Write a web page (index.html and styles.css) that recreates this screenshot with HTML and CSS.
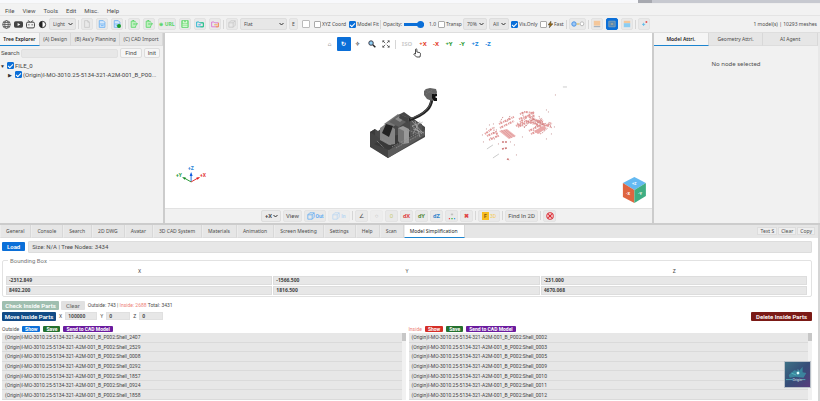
FILE: index.html
```html
<!DOCTYPE html>
<html lang="en">
<head>
<meta charset="utf-8">
<title>CAD Model Viewer</title>
<link rel="stylesheet" href="styles.css">
</head>
<body>
<svg class="defs" aria-hidden="true">
  <symbol id="doc" viewBox="0 0 10 10"><path d="M2 .8h4l2 2v6.4H2zM6 .8v2h2" fill="none" stroke="currentColor"/></symbol>
  <symbol id="docs" viewBox="0 0 10 10"><path d="M1.6.8h5l2 2v6.4h-7z" fill="#d5e8fb" stroke="currentColor"/><path d="M2 5h6.400M3.500 7h3.500" stroke="currentColor"/></symbol>
  <symbol id="exp" viewBox="0 0 10 10"><path d="M6.500 2.500V1.500h-5v7.700h5.500V7" fill="#bff0bf" stroke="currentColor"/><path d="M4 5h5M7.300 3l2 2-2 2M3 .6h2" fill="none" stroke="currentColor" stroke-width="1.200"/></symbol>
  <symbol id="folder" viewBox="0 0 10 10"><path d="M.8 2.500h3l1 1h4.400v5H.8z" fill="none" stroke="currentColor" stroke-width="1.200"/></symbol>
  <symbol id="cube" viewBox="0 0 10 10"><path d="M1 3.500h5.500V9H1zM1 3.500 3.500 1H9v5.500L6.500 9M6.500 3.500 9 1" fill="none" stroke="currentColor"/></symbol>
</svg>
<div class="app">
  <div class="window-edge"><i></i><b></b></div>
  <nav class="menu">
    <a href="#">File</a><a href="#">View</a><a href="#">Tools</a><a href="#">Edit</a><a href="#">Misc.</a><a href="#">Help</a>
  </nav>
  <div class="toolbar">
    <div class="links">
      <svg viewBox="0 0 10 10"><g fill="none" stroke="#555" stroke-width=".9"><circle cx="5" cy="5" r="4.300"/><ellipse cx="5" cy="5" rx="2" ry="4.300"/><path d="M.7 5h8.600M1.300 2.800h7.400M1.300 7.200h7.400"/></g></svg>
      <svg viewBox="0 0 10 10"><rect y="1.500" width="10" height="7" rx="1.800" fill="#444"/><path d="M4 3.300v3.400L7 5z" fill="#fff"/></svg>
      <svg viewBox="0 0 10 10"><g fill="none" stroke="#333" stroke-width="1"><rect x=".6" y="2.400" width="8.800" height="6.400" rx="1.500"/><path d="M2.600.5l1.500 1.900M7.400.5L5.900 2.400M3.200 4.600v1.400M6.800 4.600v1.400"/></g></svg>
      <svg viewBox="0 0 10 10"><circle cx="5" cy="5" r="3.500" fill="#fff" stroke="#222"/><path d="M5 1.500a3.500 3.500 0 0 0 0 7z" fill="#222"/></svg>
    </div>
    <select class="w-theme" aria-label="Theme"><option>Light</option></select>
    <span class="sep"></span>
    <div class="tools">
      <button aria-label="New" class="grey"><svg><use href="#doc"/></svg></button>
      <button aria-label="Open" class="blue"><svg><use href="#docs"/></svg></button>
      <button aria-label="Add" class="blue"><svg viewBox="0 0 10 10"><use href="#docs"/><circle cx="7.500" cy="7.500" r="2.500" fill="#199a25"/></svg></button>
    </div>
    <span class="sep"></span>
    <div class="tools">
      <button aria-label="Export" class="green"><svg><use href="#exp"/></svg></button>
      <button aria-label="Export part" class="green"><svg><use href="#exp"/></svg></button>
      <button class="green url">⊕ URL</button>
      <button aria-label="Save" class="green"><svg viewBox="0 0 10 10"><path d="M1 .8h8v8.400H1z" fill="#8ee48e" stroke="currentColor"/><path d="M3 1v2.500h4V1M2 6h6M2 8h6" fill="none" stroke="#f0fff0"/></svg></button>
      <button aria-label="Open folder" class="teal"><svg viewBox="0 0 10 10"><use href="#folder"/><path d="M5.500 3.500h3.700v5H5.500" fill="none" stroke="#2bc46c"/><path d="M3 6h3" stroke="#2188e8"/></svg></button>
      <button aria-label="Move folder" class="pink"><svg viewBox="0 0 10 10"><use href="#folder"/><path d="M6 8.500h3.200v-5M4 6h4" fill="none" stroke="#f69a32"/></svg></button>
    </div>
    <span class="sep"></span>
    <button aria-label="Box" class="tool grey"><svg><use href="#cube"/></svg></button>
    <select class="w-shade" aria-label="Shading"><option>Flat</option></select>
    <button class="edge">E</button>
    <button class="swatch" aria-label="Background colour"></button>
    <label class="check w-xyz"><input type="checkbox">XYZ Coord</label>
    <label class="check w-fit"><input type="checkbox" checked>Model Fit</label>
    <span class="sep"></span>
    <label class="opacity">Opacity:<input type="range" min="0" max="1" step="0.1" value="1"></label>
    <span class="value">1.0</span>
    <label class="check w-trans"><input type="checkbox">Transp</label>
    <select class="w-pct" aria-label="Transparency"><option>70%</option></select>
    <select class="w-all" aria-label="Scope"><option>All</option></select>
    <label class="check w-vis"><input type="checkbox" checked>Vis.Only</label>
    <label class="check w-fast"><input type="checkbox"><svg viewBox="0 0 6 8"><path d="M3.500 0 0 4.500h2.200L1.500 8 6 3.200H3.500z" fill="#9a6a10" stroke="#333" stroke-width=".5"/></svg>Fast</label>
    <span class="sep"></span>
    <button class="tool wide" aria-label="Link"><svg class="long" viewBox="0 0 14 8"><circle cx="3" cy="4" r="2.200" fill="#9cc7f5" stroke="#4b94e6"/><path d="M5.500 4h3" stroke="#d9b54a"/><ellipse cx="11" cy="3.800" rx="1.800" ry="2" fill="#fff" stroke="#bbb"/></svg></button>
    <span class="sep"></span>
    <div class="tools views">
      <button aria-label="Top layout"><svg viewBox="0 0 10 10"><path d="M1 1h8v6H1z" fill="#f4c79b"/><path d="M1 7.500h8V9H1z" fill="#a8b4c0"/></svg></button>
      <button aria-label="Middle layout" class="on"><svg viewBox="0 0 10 10"><path d="M1 1.500h8v7H1z" fill="#5689b4" stroke="#8aa5b8"/><path d="M3.500 5h3" stroke="#f5c78d"/></svg></button>
      <button aria-label="Bottom layout"><svg viewBox="0 0 10 10"><path d="M1 1h8v3H1z" fill="#f4c79b"/><path d="M1 4h8v5H1z" fill="#8bcdf2"/></svg></button>
    </div>
    <span class="sep"></span>
    <button class="tool" aria-label="Expand"><svg viewBox="0 0 10 10"><path d="M2.500 5.500h4M4.500 3.500v4" stroke="#54b6e8"/><path d="M7 2.500h2" stroke="#e23b3b" stroke-width="2"/></svg></button>
    <span class="stats">1 model(s) | 10293 meshes</span>
  </div>

  <main class="work">
    <aside class="side">
      <div class="tabs even tree-tabs">
        <button class="active">Tree Explorer</button><button>(A) Design</button><button>(B) Ass'y Planning</button><button>(C) CAD Import</button>
      </div>
      <form class="search"><label for="q">Search</label><input id="q" type="text"><button type="button">Find</button><button type="button">Init</button></form>
      <div class="tree">
        <label><span class="arrow">▼</span><input type="checkbox" checked>FILE_0</label>
        <label class="child"><span class="arrow">▶</span><input type="checkbox" checked><span class="name">(Origin)I-MO-3010.25-5134-321-A2M-001_B_P00...</span></label>
      </div>
    </aside>

    <section class="viewport">
      <svg class="scene" viewBox="165 33 487 175" preserveAspectRatio="xMidYMid meet">
        <g class="machine">
          <path d="M370 132l5-3 3 2 22-17 4-2 21 15v10l-37 21-18-12z" fill="#484848"/>
          <path d="M370 132l5-3v15l-5 3z" fill="#3a3a3a"/><path d="M370 132l18 12v14l-18-11z" fill="#444"/>
          <path d="M388 150l37-20v5l-37 23z" fill="#5b5b5b"/><path d="M374 144l13-7 32-6-30 19z" fill="#393939"/>
          <path d="M380 128l7-5 8 6v15l-6 1-9-5z" fill="#858585"/><path d="M384 124l14-10 7 5-14 9z" fill="#777"/>
          <path d="M389 122l11-8 10 5-11 8z" fill="#606060"/><path d="M395 119l6-4 5 2-6 5z" fill="#8b8b8b"/>
          <path d="M386 124l7 2-4 11-7-4z" fill="#222"/><path d="M398 128l5-2 6 3v14l-6 1-5-3z" fill="#999"/>
          <path d="M398 128l6 3v13l-6-3z" fill="#747474"/><path d="M400 114l8 4v5l-9-5z" fill="#444"/>
          <path d="M410 119l12 5v9l-12 3z" fill="#555"/><path d="M411 120l11 12m-10-6 11-4m-10 12 7-13m-8 5 10 8m-7-13 5 16m-7-8 11 4" stroke="#bbb" stroke-width=".6"/>
          <path d="M392 147l26-14M396 148l23-13M377 141l7 7M382 139l9 6M407 130l13 4" stroke="#8f8f8f" stroke-dasharray="1 1"/>
          <path d="M409 120q12-4 18-10 4-4 5-11" fill="none" stroke="#222" stroke-width="3"/><path d="M410 119q14-5 18-11 3-3 3-9" fill="none" stroke="#666" stroke-width=".8"/>
          <path d="M424 91l2-2 4-1 6 1 1 3-1 7-4 2-5-2-3-4z" fill="#636363"/><path d="M432 94h5v2h-2v2h2v3h-3l-2-3z" fill="#111"/><path d="M425 90l10 4m-9 0 7-4" stroke="#777" stroke-dasharray="1 1"/>
        </g>
        <g class="cloud" fill="none">
          <path d="M499 131l8-2 9 7-7 3z" fill="#e79c9c"/><path d="M501 130l9 8m-6-8 8 8m-6-8 9 7" stroke="#c86161" stroke-width=".5"/>
          <path d="M499 124l15-7M500 128l14-7M516 126l10-5 8 3 9-4M519 119l9-3 7 4 8 2M520 122l14-10M518 127l16-8 11 7 7-3M529 131l14-7 8 3M531 134l14-6M520 114l5-2 8 1 1 5M487 136l9-4 2 4-9 4M485 134l8-6M531 121l14 9" stroke="#d97777" stroke-width="2" stroke-dasharray="1 .6 2 1"/>
          <path d="M517 123l8 4 7-11 5 9 5-7M524 128l9-9 10 5M535 127l12-4M533 130l8 4 7-6M523 112v4M539 116l2 5M549 122l3 7M494 127v7M503 117l-3 5M510 116l-3 6" stroke="#b84f4f" stroke-width=".8" stroke-dasharray="1.500 1"/>
          <path d="M534 131l9-5 4 2-9 6z" fill="#e28a8a"/>
          <path d="M502 142h6M502 149l5-1M507 159l3 1" stroke="#bd5050" stroke-width="1.600" stroke-dasharray="2 1"/>
          <path d="M482 135h1M483 142h1M489 125h1M493 124h1M498 144h1M510 142h1M514 145h1M522 137h1M546 139h1M551 134h1M546 110h1M548 112h1M516 155h1M554 127h1M490 138h1M494 139h1M486 129h1M496 130h1M555 95h1" stroke="#b87878"/>
          <path d="M487 149l6-4M493 158l6-4M563 87h4" stroke="#aaa" stroke-width=".8"/>
        </g>
        <g class="axes" stroke-width="1">
          <path d="M191 182v-8" stroke="#1d70dd"/><path d="M191 182l-7-4" stroke="#2b9a37"/><path d="M191 182l7-4" stroke="#d33"/>
          <path d="M189.500 176l1.500-4 1.500 4z" fill="#125fe0"/><path d="M182 177l4 .8-1.500 2z" fill="#118a22"/><path d="M200 177l-4 .8 1.500 2z" fill="#e01818"/>
          <text x="188" y="170" fill="#3088d8">+Z</text><text x="176" y="177" fill="#249c34">+Y</text><text x="200" y="177" fill="#e23434">+X</text>
        </g>
        <g class="navcube">
          <path d="M623 183l11.500-6 11.500 6-11.500 7z" fill="#64b9f1"/><path d="M623 183l11.500 7v13l-11.500-6z" fill="#df6540"/><path d="M634.500 190l11.500-7v13l-11.500 7z" fill="#3fae83"/>
          <text x="632" y="185">+Z</text><text x="626" y="195">-X</text><text x="638" y="195">-Y</text>
        </g>
      </svg>
      <div class="viewtools">
        <button>⌂</button><button class="on">↻</button><button>✧</button>
        <button aria-label="Zoom"><svg viewBox="0 0 10 10"><circle cx="3.800" cy="3.800" r="2.800" fill="#8fd0f5" stroke="#334" stroke-width="1.200"/><path d="M6 6l3.200 3.200" stroke="#222" stroke-width="1.800"/></svg></button>
        <button aria-label="Fit"><svg viewBox="0 0 10 10"><path d="M1 3V1h2M7 1h2v2M9 7v2H7M3 9H1V7M1 1l3 3M9 1L6 4M1 9l3-3M9 9L6 6" fill="none" stroke="#333" stroke-width=".9"/></svg></button>
        <span class="sep"></span>
        <button class="iso">ISO</button><button class="x">+X</button><button class="x">-X</button><button class="y">+Y</button><button class="y">-Y</button><button class="z">+Z</button><button class="z">-Z</button>
      </div>
      <svg class="cursor" viewBox="0 0 8 10"><path d="M2.500 6V1.300q.7-1 1.400 0V4l3 .7q.8.5.6 1.600L7 9H3.500L.8 6.300q0-1.200 1.700-.3z" fill="#fff" stroke="#222" stroke-width=".8"/></svg>
      <div class="viewbar">
        <select aria-label="Axis"><option>+X</option></select>
        <button class="w-view">View</button>
        <button class="w-cube blue"><svg><use href="#cube"/></svg>Out</button>
        <button class="w-cube blue faint"><svg><use href="#cube"/></svg>In</button>
        <span class="sep"></span>
        <button>∠</button><button class="faint">○</button><button class="olive">0</button><button class="dx">dX</button><button class="dy">dY</button><button class="dz">dZ</button>
        <button aria-label="Points"><svg viewBox="0 0 10 10"><path d="M3.500 3h3M5 1.500v3" stroke="#aaa" stroke-width=".7"/><path d="M1 8.300h1.600" stroke="#e44" stroke-width="1.500"/><path d="M4.200 8.300h1.600" stroke="#3b3" stroke-width="1.500"/><path d="M7.400 8.300H9" stroke="#39e" stroke-width="1.500"/></svg></button>
        <button class="dx">✖</button>
        <span class="sep"></span>
        <button class="w-3d"><b>F</b>3D</button>
        <span class="sep"></span>
        <button class="w-find">Find In 2D</button>
        <span class="sep"></span>
        <button aria-label="Cancel"><svg viewBox="0 0 10 10"><circle cx="5" cy="5" r="4" fill="#fff" stroke="#d92d35" stroke-width="1.300"/><path d="M2.800 2.800l4.400 4.400M7.200 2.800L2.800 7.200" stroke="#d92d35" stroke-width="1.500"/></svg></button>
      </div>
    </section>

    <aside class="side attrs">
      <div class="tabs even"><button class="active">Model Attri.</button><button>Geometry Attri.</button><button>AI Agent</button></div>
      <p>No node selected</p>
    </aside>
  </main>

  <section class="bottom">
    <div class="tabs bottom-tabs">
      <button>General</button><button>Console</button><button>Search</button><button>2D DWG</button><button>Avatar</button><button>3D CAD System</button><button>Materials</button><button>Animation</button><button>Screen Meeting</button><button>Settings</button><button>Help</button><button>Scan</button><button class="active">Model Simplification</button>
      <div class="log"><button>Text S</button><button>Clear</button><button>Copy</button></div>
    </div>
    <div class="panel">
      <div class="load"><button class="solid c-blue">Load</button><div>Size: N/A | Tree Nodes: 3434</div></div>
      <fieldset>
        <legend>Bounding Box</legend>
        <table>
          <thead><tr><th>X</th><th>Y</th><th>Z</th></tr></thead>
          <tbody>
            <tr><td><input aria-label="Min X" value="-2312.849"></td><td><input aria-label="Min Y" value="-1566.500"></td><td><input aria-label="Min Z" value="-231.000"></td></tr>
            <tr><td><input aria-label="Max X" value="8492.200"></td><td><input aria-label="Max Y" value="1816.500"></td><td><input aria-label="Max Z" value="4670.068"></td></tr>
          </tbody>
        </table>
      </fieldset>
      <div class="row"><button class="solid c-mint w-check">Check Inside Parts</button><button class="solid c-clear">Clear</button><span>Outside: 743 | <em>Inside: 2688</em> Total: 3431</span></div>
      <div class="row move"><button class="solid c-navy w-move">Move Inside Parts</button><label>X<input value="100000"></label><label>Y<input value="0"></label><label>Z<input value="0"></label><button class="solid c-maroon">Delete Inside Parts</button></div>
      <div class="lists">
        <div class="list">
          <div class="chips"><span>Outside</span><button class="c-blue">Show</button><button class="c-green">Save</button><button class="c-purple">Send to CAD Model</button></div>
          <ul>
            <li>(Origin)I-MO-3010.25-5134-321-A2M-001_B_P002:Shell_2407</li><li>(Origin)I-MO-3010.25-5134-321-A2M-001_B_P002:Shell_2529</li><li>(Origin)I-MO-3010.25-5134-321-A2M-001_B_P002:Shell_0008</li><li>(Origin)I-MO-3010.25-5134-321-A2M-001_B_P002:Shell_0292</li><li>(Origin)I-MO-3010.25-5134-321-A2M-001_B_P002:Shell_1857</li><li>(Origin)I-MO-3010.25-5134-321-A2M-001_B_P002:Shell_0924</li><li>(Origin)I-MO-3010.25-5134-321-A2M-001_B_P002:Shell_1858</li>
          </ul>
        </div>
        <div class="list">
          <div class="chips"><span class="in">Inside</span><button class="c-red">Show</button><button class="c-green">Save</button><button class="c-purple">Send to CAD Model</button></div>
          <ul>
            <li>(Origin)I-MO-3010.25-5134-321-A2M-001_B_P002:Shell_0002</li><li>(Origin)I-MO-3010.25-5134-321-A2M-001_B_P002:Shell_0003</li><li>(Origin)I-MO-3010.25-5134-321-A2M-001_B_P002:Shell_0005</li><li>(Origin)I-MO-3010.25-5134-321-A2M-001_B_P002:Shell_0009</li><li>(Origin)I-MO-3010.25-5134-321-A2M-001_B_P002:Shell_0010</li><li>(Origin)I-MO-3010.25-5134-321-A2M-001_B_P002:Shell_0011</li><li>(Origin)I-MO-3010.25-5134-321-A2M-001_B_P002:Shell_0012</li>
          </ul>
        </div>
      </div>
    </div>
    <svg class="avatar" viewBox="0 0 27 27">
      <defs><linearGradient id="night" x2="1" y2="1"><stop stop-color="#3d7186"/><stop offset=".5" stop-color="#354d78"/><stop offset="1" stop-color="#5a3c7c"/></linearGradient></defs>
      <path d="M0 0h27v27H0z" fill="url(#night)"/><path d="M4 14l6-5 5 1 4-5v6l4 1-3 5-9-1-6 1z" fill="#3c9dac" opacity=".7"/><path d="M1 19h7M18 19h4M7 12l5 2M14 8l1 5" stroke="#55c3c6" stroke-width=".8"/><circle cx="14" cy="12" r="1.500" fill="#dff"/><text x="8" y="21">Origin</text>
    </svg>
  </section>
</div>
</body>
</html>
```
FILE: styles.css
```css
* { box-sizing: border-box; }
body { margin: 0; font: 6px/8px Roboto, "Noto Sans", sans-serif; color: #4c4c4c; background: #fff; }
button, input, select { font: inherit; color: inherit; margin: 0; padding: 0; border: 0; background: none; }
button { white-space: nowrap; }
svg { display: block; }
a { color: inherit; text-decoration: none; }
.defs { position: absolute; width: 0; height: 0; }
.app { display: flex; flex-direction: column; height: 100vh; overflow: hidden; }
.sep { width: 1px; height: 9px; background: #d6d6d6; flex: none; }

.window-edge { display: flex; flex: none; height: 4px; background: #f8f9fc; border-bottom: 1px solid #eee; }
.window-edge i { margin-left: auto; width: 14px; height: 3px; background: #a7a9b0; }
.window-edge b { width: 168px; height: 3px; background: #c7c9d0; }
.menu { display: flex; flex: none; gap: 8px; padding: 3px 5px 0; height: 12px; background: #f2f2f2; border-bottom: 1px solid #e4e4e4; }

.toolbar { display: flex; flex: none; align-items: center; gap: 2px; height: 17px; padding: 0 3px 0 2px; background: #f1f1f1; border-bottom: 1px solid #dedede; font: 5px/8px "Noto Sans", sans-serif; white-space: nowrap; }
.toolbar > * { flex: none; }
.links, .tools { display: flex; align-items: center; gap: 3px; }
.links svg { width: 9px; height: 9px; }
.toolbar select, .viewbar select { height: 12px; padding: 0 8px 0 3px; appearance: none; border: 1px solid #ddd; border-radius: 2px; background: #e7e7e7 url("data:image/svg+xml,%3Csvg xmlns='http://www.w3.org/2000/svg' viewBox='0 0 5 4'%3E%3Cpath d='M.5 1l2 2 2-2' fill='none' stroke='%23333'/%3E%3C/svg%3E") right 2px center / 5px 4px no-repeat; }
.tools button, .tool, .edge { display: grid; place-items: center; width: 12px; height: 12px; border: 1px solid #e2e2e2; border-radius: 2px; background: #e9e9e9; }
.tools svg, .tool svg { width: 8px; height: 8px; }
.tools .url { width: 18px; font-weight: 700; }
.grey { color: #c6c6c6; }
.blue { color: #65adf2; }
.green { color: #55d565; }
.teal { color: #28b7cf; }
.pink { color: #dc7bd4; }
.toolbar .wide { width: 17px; }
.tool .long { width: 14px; }
.tools .on, .viewtools .on { background: #0b6fd8; border-color: #0b6fd8; }
.toolbar .edge { width: 9px; }
.swatch { width: 8px; height: 8px; margin: 0 2px; border: 1px solid #bbb; border-radius: 1px; background: #fff; }
.w-theme { width: 27px; }
.w-shade { width: 47px; }
.w-pct { width: 24px; }
.w-all { width: 20px; }
.check { display: flex; align-items: center; gap: 1px; }
.check svg { width: 5px; height: 7px; }
.w-xyz { width: 33px; }
.w-fit { width: 29px; }
.w-trans { width: 23px; }
.w-vis { width: 27px; }
.w-fast { width: 24px; }
input[type="checkbox"] { flex: none; width: 7px; height: 7px; appearance: none; border: 1px solid #aaa; border-radius: 1px; background: #fff; }
input[type="checkbox"]:checked { border-color: #0b6fd8; background: #0b6fd8; display: grid; place-items: center; }
input[type="checkbox"]:checked::after { content: ""; width: 4px; height: 2px; border: solid #fff; border-width: 0 0 1px 1px; rotate: -45deg; }
.opacity { display: flex; align-items: center; gap: 2px; width: 41px; }
.opacity input { flex: 1; min-width: 0; height: 7px; appearance: none; background: linear-gradient(#0b6fd8, #0b6fd8) center / 100% 3px no-repeat; }
.opacity input::-webkit-slider-thumb { appearance: none; width: 7px; height: 7px; border-radius: 50%; background: #0b6fd8; }
.value { width: 10px; text-align: right; }
.toolbar .stats { margin-left: auto; }

.work { display: flex; flex: 192 1 0; min-height: 0; border-bottom: 2px solid #ccc; }
.side { display: flex; flex: none; flex-direction: column; width: 165px; background: #f1f1f1; border-right: 2px solid #ccc; }
.attrs { width: 168px; border-right-color: #e8e8e8; border-left: 2px solid #ccc; }
.attrs p { margin: 14px 0; text-align: center; font-family: "Noto Sans", sans-serif; }
.tabs { display: flex; flex: none; height: 13px; background: #e6e6e6; font: 5px/8px "Noto Sans", sans-serif; white-space: nowrap; }
.tabs > button { padding: 0 5px; border-right: 1px solid #d8d8d8; border-bottom: 1px solid #ddd; }
.tabs > .active { color: #222; background: #f5f5f5; border-bottom-color: #1c84cf; }
.even > button { flex: 1; padding: 0; }
.even > .active { font-weight: 600; }
.tree-tabs > button { flex: 1 1 auto; }
.search { display: flex; align-items: center; gap: 2px; height: 14px; padding: 0 3px 0 1px; }
.search input { flex: 1; min-width: 0; height: 9px; border: 1px solid #e0e0e0; background: #e7e7e7; border-radius: 2px; }
.search button { padding: 0 3px; border: 1px solid #ddd; background: #f6f6f6; border-radius: 2px; }
.search input + button { padding: 0 4px; }
.tree { padding-top: 1px; color: #444; }
.tree label { display: flex; align-items: center; gap: 1px; height: 9px; }
.tree .child { padding-left: 8px; }
.arrow { width: 6px; font-size: 5px; color: #333; }
.name { white-space: nowrap; }

.viewport { position: relative; display: flex; flex: 1; flex-direction: column; min-width: 0; background: #fff; }
.scene { flex: 1; min-height: 0; width: 100%; }
.scene text { font-size: 5px; font-weight: 700; }
.scene .navcube text { fill: #fff; font-size: 4px; }
.cloud { opacity: .75; }
.viewtools { position: absolute; top: 4px; left: 0; right: 0; display: flex; align-items: center; justify-content: center; font-family: "Noto Sans", sans-serif; }
.viewtools button { display: grid; place-items: center; width: 14px; height: 14px; border-radius: 1px; font-weight: 700; }
.viewtools .sep { margin: 0 2px; }
.viewtools svg { width: 8px; height: 8px; }
.viewtools .on { color: #fff; }
.viewtools .iso { width: 19px; color: #ccc; }
.viewtools .x, .viewtools .y, .viewtools .z { width: 13px; }
.viewtools .x { color: #e43a28; }
.viewtools .y { color: #2e9c35; }
.viewtools .z { color: #1683dd; }
.cursor { position: absolute; top: 15px; left: 51%; width: 8px; height: 10px; }
.viewbar { display: flex; flex: none; align-items: center; justify-content: center; gap: 2px; height: 15px; background: #f1f1f1; border-top: 1px solid #e2e2e2; }
.viewbar select { width: 20px; font-weight: 700; background-color: #eaeaea; }
.viewbar button { display: flex; align-items: center; justify-content: center; gap: 1px; width: 13px; height: 12px; border: 1px solid #e3e3e3; border-radius: 2px; background: #e9e9e9; }
.viewbar svg { width: 8px; height: 8px; }
.viewbar .w-view { width: 19px; }
.viewbar .w-cube { width: 22px; font-size: 5px; font-weight: 700; }
.viewbar .faint { opacity: .4; }
.viewbar .olive { color: #c9cc7c; }
.viewbar .dx { color: #e04343; font-weight: 700; }
.viewbar .dy { color: #558b3d; font-weight: 700; }
.viewbar .dz { color: #3687cd; font-weight: 700; }
.viewbar .w-3d { width: 22px; color: #f3cb57; font-size: 5px; }
.w-3d b { width: 7px; background: #f8bd20; color: #80560b; }
.viewbar .w-find { width: 33px; }

.bottom { position: relative; display: flex; flex: 178 1 0; flex-direction: column; min-height: 0; border-right: 2px solid #d5d5d5; }
.bottom-tabs > button { padding: 0 6px 0 5px; border-left: 1px solid #ececec; }
.bottom-tabs > .active { background: #fff; }
.log { display: flex; align-items: center; gap: 1px; margin-left: auto; padding-right: 3px; }
.log button { height: 8px; padding: 0 2px; border: 1px solid #ddd; background: #eee; line-height: 6px; }
.panel { display: flex; flex: 1; flex-direction: column; min-height: 0; padding: 3px 6px 1px 2px; }
.load { display: flex; align-items: center; gap: 3px; }
.load div { flex: 1; height: 12px; padding: 1px 3px; border: 1px solid #ddd; border-radius: 1px; background: #e7e7e7; }
.solid { height: 9px; padding: 0 5px; border-radius: 1px; color: #fff; font-weight: 600; line-height: 9px; }
.c-blue { background: #0b6fd8; }
.c-mint { background: #a0bfb0; }
.c-clear { background: #e1e1e1; color: #666; font-weight: 400; }
.c-navy { background: #114a86; }
.c-maroon { background: #7b1a16; }
.c-green { background: #24712e; }
.c-purple { background: #6a1b9e; }
.c-red { background: #d52e26; }
fieldset { min-width: 0; margin: 5px 0 4px; padding: 3px 3px 0; border: 1px solid #e2e2e2; border-radius: 2px; }
legend { margin-left: 2px; padding: 0 2px; height: 6px; line-height: 6px; color: #777; }
table { width: 100%; table-layout: fixed; border-collapse: collapse; }
th { height: 9px; padding: 0; font-size: 5px; font-weight: 400; }
td { padding: 0 1px 1px 0; }
td input { display: block; width: 100%; height: 9px; padding: 0 2px; border: 1px solid #ddd; background: #e7e7e7; font: 700 5px/7px "Noto Sans", sans-serif; color: #444; }
.row { display: flex; align-items: center; gap: 2px; height: 9px; margin-bottom: 2px; font-size: 5px; }
.row .solid { font-size: 6px; }
.row span { padding-left: 1px; }
.row em, .in { font-style: normal; color: #ee8178; }
.row .w-check, .row .w-move { padding: 0; text-align: center; }
.w-check { width: 57px; }
.w-move { width: 54px; }
.row label { display: flex; align-items: center; gap: 3px; padding-left: 1px; }
.row input { height: 8px; width: 24px; padding: 0 2px; background: #e7e7e7; border: 1px solid #e0e0e0; font-weight: 700; }
.row label:first-of-type input { width: 32px; }
.move .c-maroon { margin-left: auto; }
.lists { display: flex; flex: 1; gap: 3px; min-height: 0; }
.list { display: flex; flex: 1; flex-direction: column; min-width: 0; }
.chips { display: flex; flex: none; align-items: center; gap: 3px; height: 10px; padding-top: 2px; font-size: 5px; }
.chips button { height: 6px; padding: 0 3px; border-radius: 1px; color: #fff; font-weight: 700; line-height: 6px; }
ul { display: flex; flex: 1; flex-direction: column; min-height: 0; margin: 0; padding: 0 4px 0 0; list-style: none; background: linear-gradient(#c7c7c7, #c7c7c7) right top / 4px 8px no-repeat, #f1f1f1; }
li { display: flex; flex: 1; align-items: center; padding: 0 3px; border-bottom: 1px solid #dadada; background: #e7e7e7; font-size: 5px; color: #444; }
.avatar { position: absolute; right: 7px; bottom: 13px; width: 27px; height: 27px; border: 1px solid #b9c0c8; }
.avatar text { font-size: 4px; fill: #dce9f5; }
```
